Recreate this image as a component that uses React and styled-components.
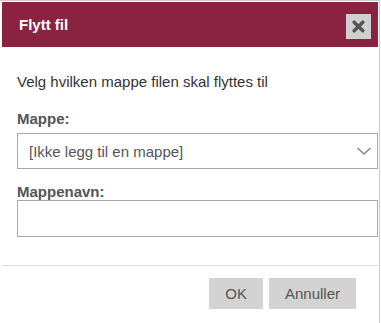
import React from 'react';
import styled, { createGlobalStyle } from 'styled-components';

const GlobalStyle = createGlobalStyle`
  body {
    margin: 0;
    background: #fff;
    font-family: "Liberation Sans", Arial, sans-serif;
  }
`;

const Dialog = styled.div`
  box-sizing: border-box;
  width: 380px;
  height: 323px;
  border-top: 1px solid #cccccc;
  border-right: 1px solid #cccccc;
  padding: 1px 1px 0 2px;
  background: #fff;
  display: flex;
  flex-direction: column;
`;

const TitleBar = styled.header`
  height: 45px;
  background: #8a2341;
  display: flex;
  align-items: center;
  justify-content: space-between;
  padding: 0 7px 0 17px;
`;

const Title = styled.h1`
  margin: 0;
  font-size: 15px;
  line-height: 17px;
  font-weight: bold;
  color: #fff;
`;

const CloseButton = styled.button`
  width: 25px;
  height: 25px;
  margin-top: 3px;
  padding: 0;
  border: none;
  background: #d0d0d0;
  display: flex;
  align-items: center;
  justify-content: center;
`;

const Body = styled.div`
  padding: 26px 0 0 15px;
  display: flex;
  flex-direction: column;
`;

const Intro = styled.p`
  margin: 0 0 20px;
  font-size: 15px;
  line-height: 17px;
  color: #333;
`;

const Label = styled.label`
  display: block;
  font-size: 15px;
  line-height: 17px;
  font-weight: bold;
  color: #555;
  margin-bottom: ${p => p.gap || 0}px;
`;

const SelectBox = styled.div`
  box-sizing: border-box;
  width: 361px;
  height: 36px;
  border: 1px solid #aaaaaa;
  padding: 0 5px 0 11px;
  display: flex;
  align-items: center;
  justify-content: space-between;
  font-size: 15px;
  color: #555;
  margin-bottom: 14px;
`;

const TextInput = styled.input`
  box-sizing: border-box;
  width: 361px;
  height: 37px;
  border: 1px solid #aaaaaa;
  padding: 0 11px;
  font-size: 15px;
  font-family: inherit;
  outline: none;
`;

const Divider = styled.hr`
  margin: 28px 0 0;
  border: none;
  border-top: 1px solid #dddddd;
`;

const Footer = styled.div`
  display: flex;
  justify-content: flex-end;
  gap: 6px;
  padding: 12px 22px 0 0;
`;

const Button = styled.button`
  height: 31px;
  padding: 0 ${p => p.pad || 16}px;
  border: none;
  background: #d3d3d3;
  color: #555;
  font-family: inherit;
  font-size: 15px;
`;

export default function App() {
  return (
    <>
      <GlobalStyle />
      <Dialog>
        <TitleBar>
          <Title>Flytt fil</Title>
          <CloseButton aria-label="Lukk">
            <svg width="13" height="13" viewBox="0 0 12 12">
              <path d="M2 2 L10 10 M10 2 L2 10" stroke="#555" strokeWidth="3.2" strokeLinecap="round" />
            </svg>
          </CloseButton>
        </TitleBar>
        <Body>
          <Intro>Velg hvilken mappe filen skal flyttes til</Intro>
          <Label gap={6}>Mappe:</Label>
          <SelectBox>
            <span>[Ikke legg til en mappe]</span>
            <svg width="16" height="10" viewBox="0 0 16 10">
              <path d="M1.5 2 L8 8 L14.5 2" fill="none" stroke="#888" strokeWidth="1.6" />
            </svg>
          </SelectBox>
          <Label>Mappenavn:</Label>
          <TextInput type="text" />
        </Body>
        <Divider />
        <Footer>
          <Button>OK</Button>
          <Button>Annuller</Button>
        </Footer>
      </Dialog>
    </>
  );
}
